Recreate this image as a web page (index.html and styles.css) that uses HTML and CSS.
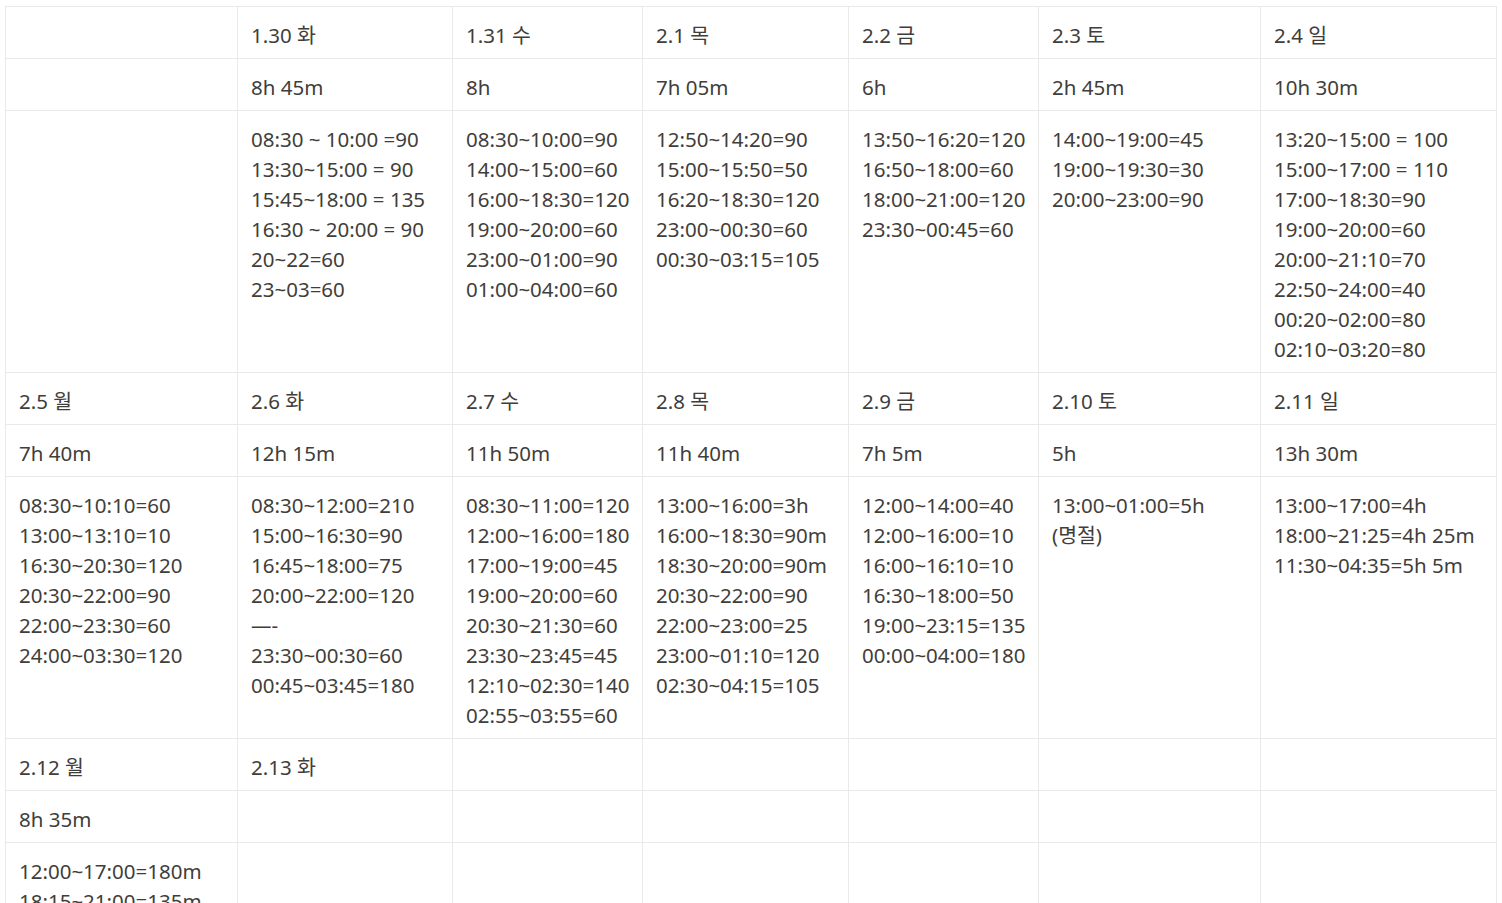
FILE: index.html
```html
<!DOCTYPE html>
<html lang="ko">
<head>
<meta charset="utf-8">
<link rel="stylesheet" href="styles.css">
</head>
<body>
<table class="sheet">
<colgroup>
<col class="c1"><col class="c2"><col class="c3"><col class="c4"><col class="c5"><col class="c6"><col class="c7">
</colgroup>
<tbody>
<tr class="row-s"><td></td><td>1.30 화</td><td>1.31 수</td><td>2.1 목</td><td>2.2 금</td><td>2.3 토</td><td>2.4 일</td></tr>
<tr class="row-s"><td></td><td>8h 45m</td><td>8h</td><td>7h 05m</td><td>6h</td><td>2h 45m</td><td>10h 30m</td></tr>
<tr class="row-l">
<td></td>
<td>08:30 ~ 10:00 =90<br>13:30~15:00 = 90<br>15:45~18:00 = 135<br>16:30 ~ 20:00 = 90<br>20~22=60<br>23~03=60</td>
<td>08:30~10:00=90<br>14:00~15:00=60<br>16:00~18:30=120<br>19:00~20:00=60<br>23:00~01:00=90<br>01:00~04:00=60</td>
<td>12:50~14:20=90<br>15:00~15:50=50<br>16:20~18:30=120<br>23:00~00:30=60<br>00:30~03:15=105</td>
<td>13:50~16:20=120<br>16:50~18:00=60<br>18:00~21:00=120<br>23:30~00:45=60</td>
<td>14:00~19:00=45<br>19:00~19:30=30<br>20:00~23:00=90</td>
<td>13:20~15:00 = 100<br>15:00~17:00 = 110<br>17:00~18:30=90<br>19:00~20:00=60<br>20:00~21:10=70<br>22:50~24:00=40<br>00:20~02:00=80<br>02:10~03:20=80</td>
</tr>
<tr class="row-s"><td>2.5 월</td><td>2.6 화</td><td>2.7 수</td><td>2.8 목</td><td>2.9 금</td><td>2.10 토</td><td>2.11 일</td></tr>
<tr class="row-s"><td>7h 40m</td><td>12h 15m</td><td>11h 50m</td><td>11h 40m</td><td>7h 5m</td><td>5h</td><td>13h 30m</td></tr>
<tr class="row-l">
<td>08:30~10:10=60<br>13:00~13:10=10<br>16:30~20:30=120<br>20:30~22:00=90<br>22:00~23:30=60<br>24:00~03:30=120</td>
<td>08:30~12:00=210<br>15:00~16:30=90<br>16:45~18:00=75<br>20:00~22:00=120<br>—-<br>23:30~00:30=60<br>00:45~03:45=180</td>
<td>08:30~11:00=120<br>12:00~16:00=180<br>17:00~19:00=45<br>19:00~20:00=60<br>20:30~21:30=60<br>23:30~23:45=45<br>12:10~02:30=140<br>02:55~03:55=60</td>
<td>13:00~16:00=3h<br>16:00~18:30=90m<br>18:30~20:00=90m<br>20:30~22:00=90<br>22:00~23:00=25<br>23:00~01:10=120<br>02:30~04:15=105</td>
<td>12:00~14:00=40<br>12:00~16:00=10<br>16:00~16:10=10<br>16:30~18:00=50<br>19:00~23:15=135<br>00:00~04:00=180</td>
<td>13:00~01:00=5h<br>(명절)</td>
<td>13:00~17:00=4h<br>18:00~21:25=4h 25m<br>11:30~04:35=5h 5m</td>
</tr>
<tr class="row-s"><td>2.12 월</td><td>2.13 화</td><td></td><td></td><td></td><td></td><td></td></tr>
<tr class="row-s"><td>8h 35m</td><td></td><td></td><td></td><td></td><td></td><td></td></tr>
<tr class="row-l">
<td>12:00~17:00=180m<br>18:15~21:00=135m<br>21:30~23:30=120m<br>00:30~03:00=150m</td>
<td></td><td></td><td></td><td></td><td></td><td></td>
</tr>
</tbody>
</table>
</body>
</html>
```

FILE: styles.css
```css
html, body {
  margin: 0;
  padding: 0;
  background: #ffffff;
}
body {
  padding: 6px 0 0 5px;
  font-family: "Noto Sans", "Noto Sans CJK KR", sans-serif;
  font-size: 20.5px;
  line-height: 30px;
  color: #3f3e3a;
}
.sheet {
  border-collapse: collapse;
  table-layout: fixed;
  width: 1491px;
}
.c1 { width: 232px; }
.c2 { width: 215px; }
.c3 { width: 190px; }
.c4 { width: 206px; }
.c5 { width: 190px; }
.c6 { width: 222px; }
.c7 { width: 236px; }
.sheet td {
  border: 1px solid #e9e9e7;
  padding: 13px 13px 8px;
  vertical-align: top;
  white-space: nowrap;
  overflow: hidden;
}
.row-s td { height: 30px; }
.row-l td { height: 240px; }
```
